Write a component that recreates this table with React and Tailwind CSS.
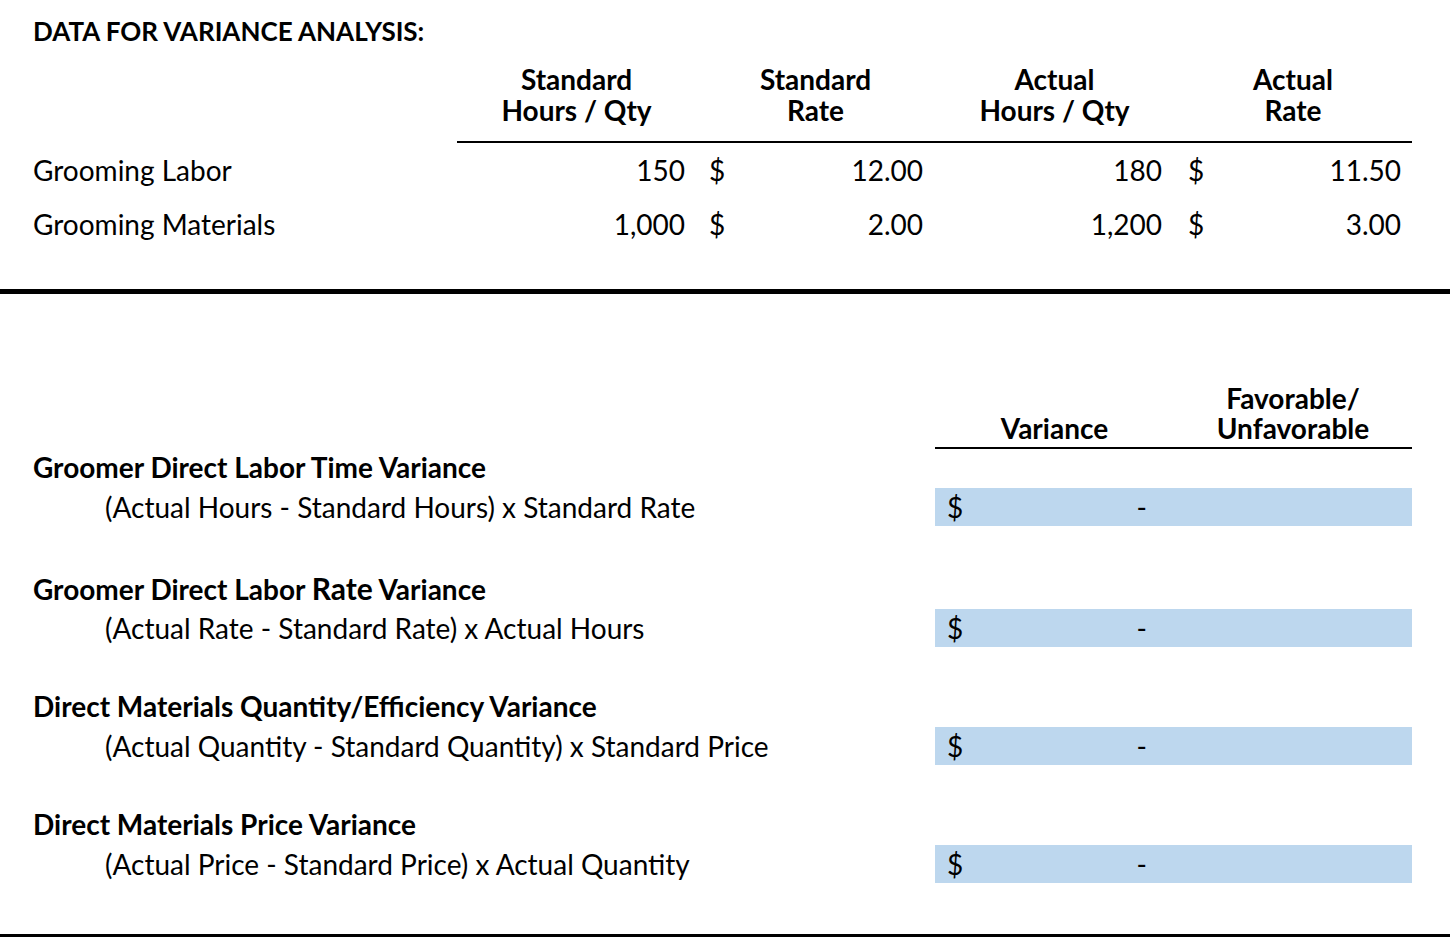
import React from 'react';

const dataRows = [
  { label: 'Grooming Labor', stdQty: '150', stdRate: '12.00', actQty: '180', actRate: '11.50' },
  { label: 'Grooming Materials', stdQty: '1,000', stdRate: '2.00', actQty: '1,200', actRate: '3.00' },
];

const variances = [
  {
    title: <>Groomer Direct Labor Time Variance</>,
    formula: '(Actual Hours - Standard Hours) x Standard Rate',
    gap: 'mt-0',
  },
  {
    title: (
      <>
        Groomer Direct Labor <span className="text-[30px]">Rate</span> Variance
      </>
    ),
    formula: '(Actual Rate - Standard Rate) x Actual Hours',
    gap: 'mt-[44px]',
  },
  {
    title: <>Direct Materials Quantity/Efficiency Variance</>,
    formula: '(Actual Quantity - Standard Quantity) x Standard Price',
    gap: 'mt-[41px]',
  },
  {
    title: <>Direct Materials Price Variance</>,
    formula: '(Actual Price - Standard Price) x Actual Quantity',
    gap: 'mt-[41px]',
  },
];

function HeadCell({ top, bottom }) {
  return (
    <div className="flex flex-col items-center border-b-2 border-black pb-[15px] pt-[2px] font-bold leading-[31px]">
      <span>{top}</span>
      <span>{bottom}</span>
    </div>
  );
}

export default function App() {
  return (
    <div className="w-[1450px] h-[940px] bg-white text-black text-[28px] font-['Lato','Carlito','Liberation_Sans',sans-serif]">
      {/* Data section */}
      <div className="pl-[33px]">
        <div className="h-[62px] flex items-center font-bold text-[26px]">DATA FOR VARIANCE ANALYSIS:</div>
        <div className="grid grid-cols-[424px_239px_239px_239px_238px]">
          <div className="border-b-2 border-transparent" />
          <HeadCell top="Standard" bottom="Hours / Qty" />
          <HeadCell top="Standard" bottom="Rate" />
          <HeadCell top="Actual" bottom="Hours / Qty" />
          <HeadCell top="Actual" bottom="Rate" />

          {dataRows.map((r) => (
            <React.Fragment key={r.label}>
              <div className="h-[54px] flex items-center">{r.label}</div>
              <div className="h-[54px] flex items-center justify-end pr-[11px]">{r.stdQty}</div>
              <div className="h-[54px] flex items-center justify-between pl-[13px] pr-[12px]">
                <span>$</span>
                <span>{r.stdRate}</span>
              </div>
              <div className="h-[54px] flex items-center justify-end pr-[12px]">{r.actQty}</div>
              <div className="h-[54px] flex items-center justify-between pl-[14px] pr-[11px]">
                <span>$</span>
                <span>{r.actRate}</span>
              </div>
            </React.Fragment>
          ))}
        </div>
      </div>

      <div className="mt-[38px] border-t-[5px] border-black" />

      {/* Variance section */}
      <div className="pl-[33px] pr-[38px]">
        <div className="mt-[89px] grid grid-cols-[902px_239px_238px] font-bold leading-[30px]">
          <div />
          <div className="flex flex-col items-center justify-end border-b-2 border-black pb-[4px]">
            <span>Variance</span>
          </div>
          <div className="flex flex-col items-center border-b-2 border-black pb-[4px]">
            <span>Favorable/</span>
            <span>Unfavorable</span>
          </div>
        </div>

        {variances.map((v, i) => (
          <div key={i} className={v.gap}>
            <div className="h-[36px] flex items-center font-bold">
              <span>{v.title}</span>
            </div>
            <div className="mt-[3px] grid grid-cols-[902px_477px] items-center leading-[38px]">
              <div className="pl-[72px]">{v.formula}</div>
              <div className="h-[38px] bg-[#bdd7ee] flex items-center">
                <div className="w-[239px] flex items-center justify-between pl-[12px] pr-[27px]">
                  <span>$</span>
                  <span>-</span>
                </div>
                <div className="flex-1" />
              </div>
            </div>
          </div>
        ))}
      </div>

      <div className="mt-[51px] border-t-[3px] border-black" />
    </div>
  );
}
